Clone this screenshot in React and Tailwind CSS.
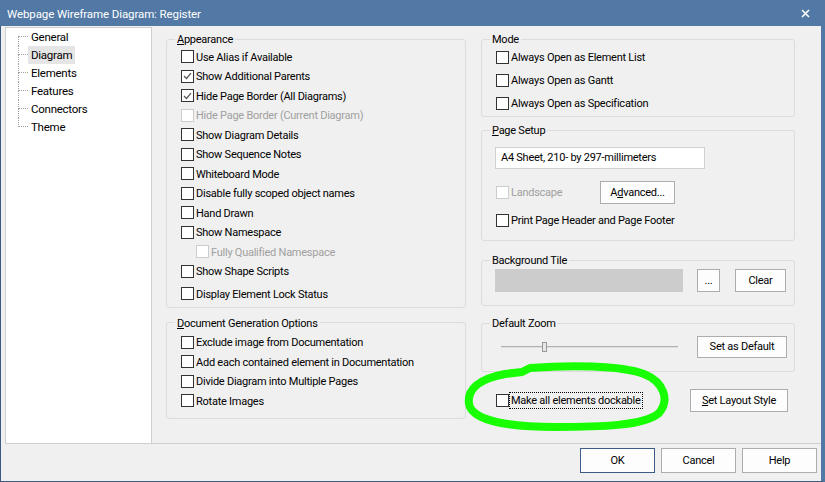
import React from "react";

const Check = ({ checked, disabled }) => (
  <span
    className={
      disabled
        ? "w-[13px] h-[13px] shrink-0 border border-[#cccccc] bg-white flex items-center justify-center"
        : "w-[13px] h-[13px] shrink-0 border border-[#333333] bg-white flex items-center justify-center"
    }
  >
    {checked && (
      <svg width="9" height="8" viewBox="0 0 9 8">
        <path d="M1 4 L3.5 6.5 L8 1.2" stroke="#555555" strokeWidth="1.2" fill="none" />
      </svg>
    )}
  </span>
);

const Row = ({ label, checked, disabled, className = "" }) => (
  <div className={"flex items-center gap-[2px] " + className}>
    <Check checked={checked} disabled={disabled} />
    <span className={disabled ? "text-[#a0a0a0] pt-[2px]" : "text-black pt-[2px]"}>{label}</span>
  </div>
);

const Btn = ({ children, className = "" }) => (
  <button className={"border border-[#adadad] bg-[#fdfdfd] flex items-center justify-center text-black pt-[1px] " + className}>
    {children}
  </button>
);

const Group = ({ legend, children, className = "", inner = "" }) => (
  <fieldset className={"border border-[#dcdcdc] rounded-[3px] " + className}>
    <legend className="ml-[8px] px-[2px] leading-[14px] pt-[2px]">{legend}</legend>
    <div className={inner}>{children}</div>
  </fieldset>
);

const treeItems = ["General", "Diagram", "Elements", "Features", "Connectors", "Theme"];

export default function App() {
  return (
    <div className="w-[825px] h-[482px] flex flex-col bg-[#f0f0f0] font-['Roboto','Liberation_Sans',sans-serif] text-[11px] tracking-[-0.25px] text-black relative overflow-hidden">
      {/* Title bar */}
      <div className="h-[26px] shrink-0 bg-[#5279a5] flex items-center justify-between pl-[7px] pr-[15px] text-white">
        <span className="leading-[16px] mt-[1px] text-[11.5px] tracking-[-0.1px]">Webpage Wireframe Diagram: Register</span>
        <svg width="9" height="9" viewBox="0 0 9 9">
          <path d="M1 1 L8 8 M8 1 L1 8" stroke="#ffffff" strokeWidth="1.6" />
        </svg>
      </div>

      {/* Body */}
      <div className="flex-1 flex flex-col border-l border-l-[#3b5b80] border-r-[4px] border-r-[#5279a5] border-b border-b-[#3b5b80]">
        <div className="mt-[1px] ml-[4px] h-[417px] flex border-b border-b-[#cfcfcf]">
          {/* Tree */}
          <div className="w-[147px] shrink-0 bg-white border-l border-t border-r border-[#cfcfcf]">
            <div className="flex flex-col">
              {treeItems.map((t, i) => (
                <div key={t} className="flex h-[18px] items-stretch">
                  <div className="ml-[12px] w-[10px] flex flex-col">
                    <div
                      className={
                        i === 0
                          ? "h-[9px] border-b border-dotted border-[#a0a0a0]"
                          : "h-[9px] border-b border-l border-dotted border-[#a0a0a0]"
                      }
                    />
                    <div
                      className={
                        i === treeItems.length - 1
                          ? "h-[9px]"
                          : "h-[9px] border-l border-dotted border-[#a0a0a0]"
                      }
                    />
                  </div>
                  <span
                    className={
                      t === "Diagram"
                        ? "px-[3px] leading-[18px] bg-[#e5e5e5] text-[11.5px]"
                        : "px-[3px] leading-[18px] text-[11.5px]"
                    }
                  >
                    {t}
                  </span>
                </div>
              ))}
            </div>
          </div>

          {/* Right area */}
          <div className="flex-1 flex pt-[4px] pl-[14px] gap-[15px]">
            {/* Left column */}
            <div className="w-[300px] flex flex-col">
              <Group legend={<><u>A</u>ppearance</>} inner="pl-[14px] pb-[3px]">
                <Row className="h-[19.5px]" label="Use Alias if Available" />
                <Row className="h-[19.5px]" label="Show Additional Parents" checked />
                <Row className="h-[19.5px]" label="Hide Page Border (All Diagrams)" checked />
                <Row className="h-[19.5px]" label="Hide Page Border (Current Diagram)" disabled />
                <Row className="h-[19.5px]" label="Show Diagram Details" />
                <Row className="h-[19.5px]" label="Show Sequence Notes" />
                <Row className="h-[19.5px]" label="Whiteboard Mode" />
                <Row className="h-[19.5px]" label="Disable fully scoped object names" />
                <Row className="h-[19.5px]" label="Hand Drawn" />
                <Row className="h-[19.5px]" label="Show Namespace" />
                <Row className="h-[19.5px] pl-[15px]" label="Fully Qualified Namespace" disabled />
                <Row className="h-[19.5px]" label="Show Shape Scripts" />
                <Row className="h-[19.5px] mt-[3px]" label="Display Element Lock Status" />
              </Group>
              <Group legend={<><u>D</u>ocument Generation Options</>} className="mt-[7px]" inner="pl-[14px] pt-[2px] pb-[7px]">
                <Row className="h-[19.5px]" label="Exclude image from Documentation" />
                <Row className="h-[19.5px]" label="Add each contained element in Documentation" />
                <Row className="h-[19.5px]" label="Divide Diagram into Multiple Pages" />
                <Row className="h-[19.5px]" label="Rotate Images" />
              </Group>
            </div>

            {/* Right column */}
            <div className="w-[314px] flex flex-col">
              <Group legend="Mode" inner="pl-[14px] pb-[3px] flex flex-col gap-[3px]">
                <Row className="h-[20px]" label="Always Open as Element List" />
                <Row className="h-[20px]" label="Always Open as Gantt" />
                <Row className="h-[20px]" label="Always Open as Specification" />
              </Group>

              <Group legend={<><u>P</u>age Setup</>} className="mt-[5px]" inner="pl-[13px] pt-[9px] pb-[10px]">
                <div className="w-[210px] h-[22px] bg-white border border-[#d0d0d0] flex items-center pl-[5px] pt-[1px]">
                  A4 Sheet, 210- by 297-millimeters
                </div>
                <div className="flex items-center h-[23px] mt-[12px] pl-[1px]">
                  <Row className="w-[104px]" label="Landscape" disabled />
                  <Btn className="w-[75px] h-[23px]">
                    A<u>d</u>vanced...
                  </Btn>
                </div>
                <Row className="h-[20px] mt-[6px] pl-[1px]" label="Print Page Header and Page Footer" />
              </Group>

              <Group legend="Background Tile" className="mt-[11px]" inner="pl-[13px] pt-[1px] pb-[13px]">
                <div className="flex items-center h-[23px]">
                  <div className="w-[188px] h-[23px] bg-[#cccccc]" />
                  <Btn className="ml-[14px] w-[23px] h-[23px]">...</Btn>
                  <Btn className="ml-[15px] w-[51px] h-[23px]">Clear</Btn>
                </div>
              </Group>

              <Group legend="Default Zoom" className="mt-[9px]" inner="pl-[19px] pt-[5px] pb-[13px]">
                <div className="flex items-center h-[22px]">
                  <div className="relative w-[177px] h-[22px] flex items-center">
                    <div className="w-full h-[2px] bg-[#b0b0b0] border-b border-b-[#e0e0e0]" />
                    <div className="absolute left-[41px] top-[6px] w-[5px] h-[10px] bg-[#e6e6e6] border border-[#999999]" />
                  </div>
                  <Btn className="ml-[19px] w-[90px] h-[22px]">Set as Default</Btn>
                </div>
              </Group>

              <div className="mt-[17px] h-[23px] flex items-center justify-between pl-[15px] pr-[7px]">
                <div className="flex items-center">
                  <Check />
                  <span className="border border-dotted border-black px-[1px] leading-[14px] pt-[1px]">
                    Make all elements dockable
                  </span>
                </div>
                <Btn className="w-[98px] h-[23px]">
                  <u>S</u>et Layout Style
                </Btn>
              </div>
            </div>
          </div>
        </div>

        {/* Bottom buttons */}
        <div className="flex justify-end gap-[6px] pt-[4px] pr-[4px]">
          <Btn className="w-[75px] h-[25px] !border-[#3d5c85]">OK</Btn>
          <Btn className="w-[75px] h-[25px]">Cancel</Btn>
          <Btn className="w-[75px] h-[25px]">Help</Btn>
        </div>
      </div>

      {/* Green hand-drawn annotation */}
      <svg className="absolute left-0 top-0 pointer-events-none" width="825" height="482" viewBox="0 0 825 482">
        <path
          d="M530 368 C 568 365, 620 365, 644 374 C 664 382, 670 400, 659 413 C 645 426, 598 427, 555 427 C 510 427, 472 421, 469 404 C 467 390, 478 379, 505 374 L 522 372 Z"
          stroke="#17ff00"
          strokeWidth="8"
          fill="none"
          strokeLinejoin="round"
        />
      </svg>
    </div>
  );
}
